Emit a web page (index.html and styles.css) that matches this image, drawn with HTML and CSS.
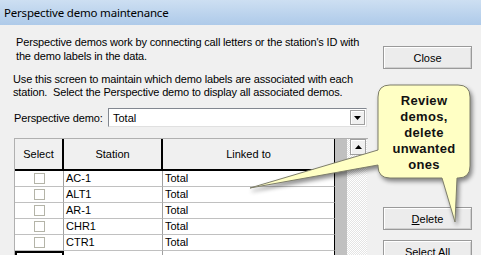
FILE: index.html
```html
<!DOCTYPE html>
<html lang="en">
<head>
    <meta charset="UTF-8">
    <title>Perspective demo maintenance</title>
    <link rel="stylesheet" href="styles.css">
</head>
<body>

<div class="window">
    <div class="titlebar">Perspective demo maintenance</div>

    <div class="content">
        <div class="main">
            <p class="intro">Perspective demos work by connecting call letters or the station's ID with<br>the demo labels in the data.</p>
            <p class="usage">Use this screen to maintain which demo labels are associated with each<br>station.&nbsp; Select the Perspective demo to display all associated demos.</p>

            <div class="demo-row">
                <span class="demo-label">Perspective demo:</span>
                <div class="combo">
                    <span class="combo-value">Total</span>
                    <span class="combo-btn">
                        <svg width="7" height="4" viewBox="0 0 7 4"><path d="M0 0H7L3.5 4Z" fill="#000"/></svg>
                    </span>
                </div>
            </div>

            <!-- Grade de estações -->
            <div class="grid">
                <div class="grid-cols">
                    <div class="row head">
                        <div class="cell">Select</div>
                        <div class="cell">Station</div>
                        <div class="cell last">Linked to</div>
                    </div>
                    <div class="row">
                        <div class="cell check"><span class="box"></span></div>
                        <div class="cell">AC-1</div>
                        <div class="cell last">Total</div>
                    </div>
                    <div class="row">
                        <div class="cell check"><span class="box"></span></div>
                        <div class="cell">ALT1</div>
                        <div class="cell last">Total</div>
                    </div>
                    <div class="row">
                        <div class="cell check"><span class="box"></span></div>
                        <div class="cell">AR-1</div>
                        <div class="cell last">Total</div>
                    </div>
                    <div class="row">
                        <div class="cell check"><span class="box"></span></div>
                        <div class="cell">CHR1</div>
                        <div class="cell last">Total</div>
                    </div>
                    <div class="row">
                        <div class="cell check"><span class="box"></span></div>
                        <div class="cell">CTR1</div>
                        <div class="cell last">Total</div>
                    </div>
                    <div class="row">
                        <div class="cell check focused"><span class="box"></span></div>
                        <div class="cell"></div>
                        <div class="cell last"></div>
                    </div>
                </div>
                <div class="grid-filler"></div>
                <div class="scrollbar">
                    <div class="scroll-btn">
                        <svg width="7" height="4" viewBox="0 0 7 4"><path d="M0 4H7L3.5 0Z" fill="#000"/></svg>
                    </div>
                </div>
            </div>
        </div>

        <div class="side">
            <button class="btn close-btn">Close</button>
            <button class="btn delete-btn"><u>D</u>elete</button>
            <button class="btn select-btn">Select All</button>
        </div>
    </div>

    <!-- Balão de comentário -->
    <svg class="callout" width="481" height="255" viewBox="0 0 481 255">
        <path d="M390 85H458Q470 85 470 97V166Q470 178 458 178H457L455 222L442 178H390Q378 178 378 166V165L250 188L378 150V97Q378 85 390 85Z"
              fill="#ffffc4" stroke="#7d7d6a" stroke-width="1"/>
    </svg>
    <div class="callout-text">Review<br>demos,<br>delete<br>unwanted<br>ones</div>
</div>

</body>
</html>
```

FILE: styles.css
```css
body {
    margin: 0;
    background-color: #f0f0f0;
    font-family: "Liberation Sans", Arial, sans-serif;
    font-size: 11px;
    color: #000;
    overflow: hidden;
}

.window {
    position: relative;
    width: 481px;
    height: 255px;
    overflow: hidden;
}

.titlebar {
    height: 25px;
    line-height: 25px;
    padding-left: 4px;
    font-family: "Noto Sans", sans-serif;
    font-size: 11.5px;
    letter-spacing: -0.2px;
    background: linear-gradient(#cddff2, #aecae9);
}

.content {
    display: flex;
}

.main {
    width: 355px;
    padding: 10px 0 0 13px;
}

p {
    margin: 0;
    line-height: 14px;
    white-space: nowrap;
    letter-spacing: -0.15px;
}

.intro {
    padding-left: 3px;
}

.usage {
    margin-top: 10px;
    line-height: 13px;
}

.demo-row {
    display: flex;
    align-items: center;
    margin-top: 9px;
    padding-left: 1px;
}

.demo-label {
    width: 94px;
    letter-spacing: -0.15px;
}

.combo {
    display: flex;
    align-items: center;
    justify-content: space-between;
    width: 259px;
    height: 19px;
    box-sizing: border-box;
    background-color: #fff;
    border: 1px solid #828790;
    border-right-color: #e0e0e0;
    border-bottom-color: #e0e0e0;
    padding-left: 4px;
}

.combo-btn {
    display: flex;
    align-items: center;
    justify-content: center;
    width: 15px;
    height: 15px;
    margin-right: 1px;
    box-sizing: border-box;
    background-color: #f0f0f0;
    border: 1px solid #a0a0a0;
    box-shadow: inset 1px 1px #fff;
}

.grid {
    display: flex;
    margin-top: 11px;
    margin-left: 1px;
    width: 353px;
    height: 120px;
    border-top: 1px solid #b0b0b0;
    border-left: 1px solid #b0b0b0;
}

.grid-cols {
    width: 320px;
}

.row {
    display: grid;
    grid-template-columns: 49px 99px 172px;
    height: 16px;
    background-color: #fff;
}

.cell {
    box-sizing: border-box;
    border-right: 1px solid #a0a0a0;
    border-bottom: 1px solid #c0c0c0;
    padding-left: 2px;
    line-height: 15px;
    white-space: nowrap;
}

.cell.last {
    border-right-color: #000;
}

.row.head {
    height: 32px;
    background-color: #f0f0f0;
}

.head .cell {
    border-right: 2px solid #000;
    border-bottom: 2px solid #000;
    line-height: 30px;
    text-align: center;
    padding-left: 0;
}

.head .cell.last {
    border-right-width: 1px;
}

.check {
    display: flex;
    justify-content: center;
    align-items: center;
    padding-left: 0;
}

.box {
    width: 9px;
    height: 9px;
    border: 1px solid #b4b4a8;
    background-color: #fff;
}

.focused {
    border: 2px solid #000;
    border-bottom: none;
}

.grid-filler {
    width: 12px;
    background-color: #c0c0c0;
}

.scrollbar {
    width: 20px;
    background-color: #f4f4f4;
    background-image: conic-gradient(#e4e4e4 25%, #fff 0 50%, #e4e4e4 0 75%, #fff 0);
    background-size: 2px 2px;
}

.scroll-btn {
    display: flex;
    align-items: center;
    justify-content: center;
    width: 16px;
    height: 16px;
    margin-left: 3px;
    box-sizing: border-box;
    background-color: #f0f0f0;
    border: 1px solid #a0a0a0;
    box-shadow: inset 1px 1px #fff;
}

.side {
    display: flex;
    flex-direction: column;
    padding: 21px 0 0 15px;
}

.btn {
    width: 89px;
    height: 23px;
    padding: 0;
    font-family: "Liberation Sans", Arial, sans-serif;
    font-size: 11px;
    color: #000;
    background-color: #ececec;
    border: 1px solid #9a9a9a;
    box-shadow: inset 1px 1px #fff, inset -1px -1px #d0d0d0;
}

.delete-btn {
    margin-top: 138px;
}

.select-btn {
    margin-top: 10px;
}

.callout {
    position: absolute;
    left: 0;
    top: 0;
    filter: drop-shadow(2px 3px 2px rgba(0, 0, 0, 0.45));
}

.callout-text {
    position: absolute;
    left: 378px;
    top: 93px;
    width: 92px;
    text-align: center;
    font-family: "Liberation Sans", Arial, sans-serif;
    font-weight: bold;
    font-size: 13px;
    letter-spacing: 0.3px;
    line-height: 16px;
    color: #111;
}
```
